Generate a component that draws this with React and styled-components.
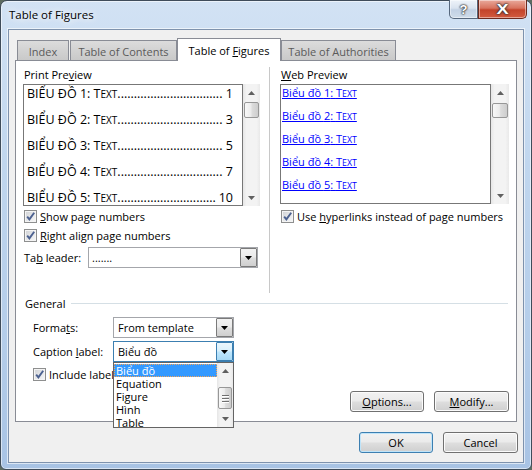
import React from "react";
import styled, { createGlobalStyle } from "styled-components";

const GlobalStyle = createGlobalStyle`
  html, body { margin: 0; padding: 0; background: #5d6b60; }
  body {
    font-family: "Open Sans", "Noto Sans", "Liberation Sans", sans-serif;
    font-size: 11px;
    color: #000;
  }
  * { box-sizing: border-box; }
`;

const Window = styled.div`
  width: 532px;
  height: 470px;
  display: flex;
  flex-direction: column;
  padding: 0 7px 6px 7px;
  border: 1px solid #3f4c5a;
  border-radius: 7px 7px 6px 6px;
  background: linear-gradient(180deg, #d2e2f4 0%, #c0d6ee 35%, #b3cce9 75%, #a8c3e4 100%);
  box-shadow: inset 0 0 0 1px rgba(255, 255, 255, 0.55);
`;

const TitleBar = styled.div`
  height: 28px;
  flex: none;
  display: flex;
  align-items: flex-start;
`;

const Title = styled.div`
  padding: 6px 0 0 1px;
  line-height: 16px;
  font-size: 11.5px;
  text-shadow: 0 0 6px #fff, 0 0 10px #fff;
`;

const CaptionButtons = styled.div`
  margin: -1px -3px 0 auto;
  display: flex;
`;

const CapButton = styled.div`
  width: ${(p) => p.$w}px;
  height: 19px;
  display: flex;
  align-items: center;
  justify-content: center;
  font-family: "Liberation Sans", sans-serif;
  font-weight: bold;
  color: #fff;
  border: 1px solid ${(p) => (p.$close ? "#6d2a1f" : "#56677d")};
  border-top: none;
  border-radius: ${(p) => (p.$close ? "0 0 5px 0" : "0 0 0 5px")};
  background: ${(p) =>
    p.$close
      ? "linear-gradient(180deg, #e9a99b 0%, #d8735e 45%, #c3432a 55%, #d35b3f 100%)"
      : "linear-gradient(180deg, #eef3f9 0%, #d9e3ef 45%, #c2d1e4 55%, #cfdcea 100%)"};
  text-shadow: 0 0 1px #333, 0 0 2px #333, 0 0 2px #333;
  font-size: ${(p) => (p.$close ? 14 : 13)}px;
  box-shadow: inset 0 0 0 1px rgba(255, 255, 255, 0.45);
`;

const CapGlyph = styled.span`
  display: inline-block;
  transform: ${(p) => (p.$wide ? "scaleX(1.3)" : "none")};
`;

const Client = styled.div`
  flex: 1;
  display: flex;
  flex-direction: column;
  padding: 8px 6px 0 6px;
  background: #f0f0f0;
  border: 1px solid #7e92ad;
  box-shadow: 0 0 0 1px rgba(255, 255, 255, 0.6);
`;

const TabStrip = styled.div`
  height: 22px;
  margin-left: 2px;
  display: flex;
  align-items: flex-end;
  flex: none;
`;

const Tab = styled.div`
  position: relative;
  z-index: ${(p) => (p.$active ? 2 : 0)};
  width: ${(p) => p.$w}px;
  height: ${(p) => (p.$active ? 23 : 20)}px;
  margin-bottom: ${(p) => (p.$active ? -1 : 0)}px;
  margin-right: ${(p) => (p.$gap ? 1 : 0)}px;
  display: flex;
  align-items: center;
  justify-content: center;
  padding-top: ${(p) => (p.$active ? 0 : 1)}px;
  white-space: nowrap;
  border: 1px solid #898c95;
  border-bottom: none;
  color: ${(p) => (p.$active ? "#000" : "#5a5a5a")};
  background: ${(p) =>
    p.$active ? "#fff" : "linear-gradient(180deg, #dcdcdc 0%, #d2d2d2 50%, #c9c9c9 100%)"};
`;

const Panel = styled.div`
  position: relative;
  z-index: 1;
  height: 362px;
  flex: none;
  display: flex;
  flex-direction: column;
  padding: 6px 5px 0 7px;
  background: #fff;
  border: 1px solid #898c95;
`;

const TopSection = styled.div`
  height: 226px;
  display: flex;
  flex: none;
`;

const Column = styled.div`
  width: ${(p) => p.$w}px;
  display: flex;
  flex-direction: column;
  flex: none;
`;

const Divider = styled.div`
  width: 1px;
  margin: 0 10px 0 8px;
  background: #c8c8c8;
`;

const Label = styled.div`
  height: 16px;
  line-height: 16px;
  padding-left: 1px;
  white-space: nowrap;
`;

const Key = styled.span`
  text-decoration: underline;
`;

const Preview = styled.div`
  height: ${(p) => p.$h}px;
  margin-top: 1px;
  display: flex;
  flex: none;
`;

const PreviewBox = styled.div`
  width: ${(p) => p.$w}px;
  height: 100%;
  border: 1px solid #777;
  overflow: hidden;
  padding: ${(p) => p.$pad};
`;

const PrintRow = styled.div`
  height: 26px;
  line-height: 18px;
  display: flex;
  font-size: 12.5px;
  white-space: nowrap;
`;

const Leader = styled.span`
  flex: 1;
  overflow: hidden;
  min-width: 0;
  margin-right: 3px;
`;

const Small = styled.span`
  font-size: 0.8em;
`;

const WebRow = styled.div`
  height: 23px;
  line-height: 16px;
  white-space: nowrap;
`;

const WebLink = styled.span`
  color: #0000ff;
  text-decoration: underline;
  font-size: 11px;
`;

const ScrollTrack = styled.div`
  width: ${(p) => p.$w}px;
  height: 100%;
  flex: none;
  display: flex;
  flex-direction: column;
  align-items: center;
  background: linear-gradient(90deg, #e6e6e6 0%, #f3f3f3 20%, #f3f3f3 80%, #e9e9e9 100%);
`;

const ArrowZone = styled.div`
  height: ${(p) => p.$h}px;
  width: 100%;
  flex: none;
  display: flex;
  align-items: center;
  justify-content: center;
`;

const Thumb = styled.div`
  width: calc(100% - 2px);
  height: ${(p) => p.$h}px;
  margin-top: ${(p) => p.$top}px;
  flex: none;
  display: flex;
  flex-direction: column;
  align-items: center;
  justify-content: center;
  gap: 2px;
  border: 1px solid #979797;
  border-radius: 2px;
  background: linear-gradient(90deg, #f8f8f8 0%, #ececec 45%, #dcdcdc 55%, #cdcdcd 100%);
`;

const Grip = styled.div`
  width: 7px;
  height: 1px;
  background: #707070;
  box-shadow: 0 1px 0 #fff;
`;

const Fill = styled.div`
  flex: 1;
`;

const CheckRow = styled.div`
  height: 19px;
  margin-top: ${(p) => p.$mt || 0}px;
  display: flex;
  align-items: center;
  gap: 3px;
  padding-left: 1px;
  white-space: nowrap;
  flex: none;
`;

const CheckBox = styled.div`
  width: 13px;
  height: 13px;
  flex: none;
  display: flex;
  align-items: center;
  justify-content: center;
  border: 1px solid #8e8f8f;
  background: linear-gradient(135deg, #cfd1d4 0%, #e7e8ea 55%, #f7f7f7 100%);
  box-shadow: inset 0 0 0 1px #f4f4f4;
`;

const FieldRow = styled.div`
  height: 21px;
  margin-top: ${(p) => p.$mt}px;
  display: flex;
  align-items: center;
  flex: none;
`;

const FieldLabel = styled.div`
  width: ${(p) => p.$w}px;
  flex: none;
  padding-left: 1px;
  white-space: nowrap;
`;

const Combo = styled.div`
  position: relative;
  width: ${(p) => p.$w}px;
  height: 21px;
  flex: none;
  display: flex;
  align-items: stretch;
  background: #fff;
  border: 1px solid ${(p) => (p.$focus ? "#3c7fb1" : "#a4a6ab")};
`;

const ComboValue = styled.div`
  flex: 1;
  display: flex;
  align-items: center;
  padding-left: ${(p) => p.$pl || 4}px;
  white-space: nowrap;
`;

const ComboArrow = styled.div`
  width: 17px;
  flex: none;
  display: flex;
  align-items: center;
  justify-content: center;
  border: 1px solid ${(p) => (p.$focus ? "#3c7fb1" : "#7a7a7a")};
  border-radius: 1px;
  background: ${(p) =>
    p.$focus
      ? "linear-gradient(180deg, #eaf6fd 0%, #d9f0fc 45%, #bee6fd 55%, #a7d9f5 100%)"
      : "linear-gradient(180deg, #f2f2f2 0%, #ebebeb 45%, #dddddd 55%, #cfcfcf 100%)"};
`;

const DropList = styled.div`
  position: absolute;
  z-index: 5;
  top: 20px;
  left: -1px;
  width: 121px;
  height: 66px;
  display: flex;
  background: #fff;
  border: 1px solid #646464;
`;

const ListItems = styled.div`
  flex: 1;
  padding-top: 1px;
  display: flex;
  flex-direction: column;
`;

const ListItem = styled.div`
  height: 13px;
  line-height: 13px;
  padding-left: 2px;
  white-space: nowrap;
  color: ${(p) => (p.$sel ? "#fff" : "#000")};
  background: ${(p) => (p.$sel ? "#3399ff" : "transparent")};
  outline: ${(p) => (p.$sel ? "1px dotted #f5a55a" : "none")};
  outline-offset: -1px;
`;

const GroupHeader = styled.div`
  height: 16px;
  margin-top: 2px;
  display: flex;
  align-items: center;
  padding-left: 2px;
  flex: none;
`;

const GroupLine = styled.div`
  flex: 1;
  height: 1px;
  margin: 0 3px 0 6px;
  background: #d5dfe5;
`;

const GroupBody = styled.div`
  padding-left: 9px;
  display: flex;
  flex-direction: column;
`;

const ButtonRow = styled.div`
  margin-top: ${(p) => p.$mt}px;
  margin-right: ${(p) => p.$mr}px;
  display: flex;
  justify-content: flex-end;
  gap: ${(p) => p.$gap}px;
  flex: none;
`;

const Button = styled.div`
  width: ${(p) => p.$w}px;
  height: 21px;
  display: flex;
  align-items: center;
  justify-content: center;
  border: 1px solid ${(p) => (p.$default ? "#3c7fb1" : "#707070")};
  border-radius: 3px;
  background: linear-gradient(180deg, #f2f2f2 0%, #ebebeb 45%, #dddddd 55%, #cfcfcf 100%);
  box-shadow: inset 0 0 0 1px ${(p) => (p.$default ? "#bfe4f9" : "#fbfbfb")};
`;

const Tri = ({ up, color = "#000", w = 7, h = 4 }) => (
  <svg width={w} height={h} viewBox={`0 0 ${w} ${h}`}>
    <polygon
      points={up ? `0,${h} ${w},${h} ${w / 2},0` : `0,0 ${w},0 ${w / 2},${h}`}
      fill={color}
    />
  </svg>
);

const Check = () => (
  <svg width="11" height="11" viewBox="0 0 11 11">
    <path d="M2.2 5.6 L4.4 8.4 L9.2 1.8" fill="none" stroke="#4c6190" strokeWidth="1.9" />
  </svg>
);

// "Text" in the caption style: capital T, small-cap EXT
const CapsText = () => (
  <>
    T<Small>EXT</Small>
  </>
);

function ScrollBar({ width, zone, thumbTop, thumbH, grip }) {
  return (
    <ScrollTrack $w={width}>
      <ArrowZone $h={zone}>
        <Tri up color="#606060" w={7} h={4} />
      </ArrowZone>
      <Thumb $top={thumbTop} $h={thumbH}>
        {grip && (
          <>
            <Grip />
            <Grip />
            <Grip />
          </>
        )}
      </Thumb>
      <Fill />
      <ArrowZone $h={zone}>
        <Tri color="#606060" w={7} h={4} />
      </ArrowZone>
    </ScrollTrack>
  );
}

function Select({ width, value, focus, pl, children }) {
  return (
    <Combo $w={width} $focus={focus}>
      <ComboValue $pl={pl}>{value}</ComboValue>
      <ComboArrow $focus={focus}>
        <Tri />
      </ComboArrow>
      {children}
    </Combo>
  );
}

const printEntries = [
  ["1", "1"],
  ["2", "3"],
  ["3", "5"],
  ["4", "7"],
  ["5", "10"],
];

const dots = ".".repeat(120);

const captionOptions = ["Biểu đồ", "Equation", "Figure", "Hình", "Table"];

export default function App() {
  return (
    <>
      <GlobalStyle />
      <Window>
        <TitleBar>
          <Title>Table of Figures</Title>
          <CaptionButtons>
            <CapButton $w={29}>?</CapButton>
            <CapButton $w={49} $close>
              <CapGlyph $wide>X</CapGlyph>
            </CapButton>
          </CaptionButtons>
        </TitleBar>

        <Client>
          <TabStrip>
            <Tab $w={52} $gap>Index</Tab>
            <Tab $w={107}>Table of Contents</Tab>
            <Tab $w={104} $active>
              <span>
                Table of <Key>F</Key>igures
              </span>
            </Tab>
            <Tab $w={115}>Table of Authorities</Tab>
          </TabStrip>

          <Panel>
            <TopSection>
              <Column $w={238}>
                <Label>
                  Print Pre<Key>v</Key>iew
                </Label>
                <Preview $h={122}>
                  <PreviewBox $w={220} $pad="0 9px 0 3px">
                    {printEntries.map(([n, page]) => (
                      <PrintRow key={n}>
                        <span>
                          BIỂU ĐỒ {n}: <CapsText />
                        </span>
                        <Leader>{dots}</Leader>
                        <span>{page}</span>
                      </PrintRow>
                    ))}
                  </PreviewBox>
                  <ScrollBar width={17} zone={17} thumbTop={1} thumbH={16} />
                </Preview>
                <CheckRow $mt={1}>
                  <CheckBox>
                    <Check />
                  </CheckBox>
                  <span>
                    <Key>S</Key>how page numbers
                  </span>
                </CheckRow>
                <CheckRow>
                  <CheckBox>
                    <Check />
                  </CheckBox>
                  <span>
                    <Key>R</Key>ight align page numbers
                  </span>
                </CheckRow>
                <FieldRow $mt={2}>
                  <FieldLabel $w={65}>
                    Ta<Key>b</Key> leader:
                  </FieldLabel>
                  <Select width={170} value="......." pl={3} />
                </FieldRow>
              </Column>

              <Divider />

              <Column $w={229}>
                <Label>
                  <Key>W</Key>eb Preview
                </Label>
                <Preview $h={120}>
                  <PreviewBox $w={211} $pad="0 0 0 1px">
                    {printEntries.map(([n]) => (
                      <WebRow key={n}>
                        <WebLink>
                          Biểu đồ {n}: <CapsText />
                        </WebLink>
                      </WebRow>
                    ))}
                  </PreviewBox>
                  <ScrollBar width={18} zone={17} thumbTop={2} thumbH={15} />
                </Preview>
                <CheckRow $mt={3}>
                  <CheckBox>
                    <Check />
                  </CheckBox>
                  <span>
                    Use <Key>h</Key>yperlinks instead of page numbers
                  </span>
                </CheckRow>
              </Column>
            </TopSection>

            <GroupHeader>
              <span>General</span>
              <GroupLine />
            </GroupHeader>
            <GroupBody>
              <FieldRow $mt={6}>
                <FieldLabel $w={81}>
                  Forma<Key>t</Key>s:
                </FieldLabel>
                <Select width={121} value="From template" />
              </FieldRow>
              <FieldRow $mt={3}>
                <FieldLabel $w={81}>
                  Caption <Key>l</Key>abel:
                </FieldLabel>
                <Select width={121} value="Biểu đồ" focus>
                  <DropList>
                    <ListItems>
                      {captionOptions.map((o, i) => (
                        <ListItem key={o} $sel={i === 0}>
                          {o}
                        </ListItem>
                      ))}
                    </ListItems>
                    <ScrollBar width={16} zone={16} thumbTop={8} thumbH={22} grip />
                  </DropList>
                </Select>
              </FieldRow>
              <CheckRow $mt={3}>
                <CheckBox>
                  <Check />
                </CheckBox>
                <span>Include label and number</span>
              </CheckRow>
            </GroupBody>

            <ButtonRow $mt={7} $mr={2} $gap={10}>
              <Button $w={74}>
                <span>
                  <Key>O</Key>ptions...
                </span>
              </Button>
              <Button $w={75}>
                <span>
                  <Key>M</Key>odify...
                </span>
              </Button>
            </ButtonRow>
          </Panel>

          <ButtonRow $mt={10} $mr={-1} $gap={10}>
            <Button $w={74} $default>
              OK
            </Button>
            <Button $w={75}>Cancel</Button>
          </ButtonRow>
        </Client>
      </Window>
    </>
  );
}
